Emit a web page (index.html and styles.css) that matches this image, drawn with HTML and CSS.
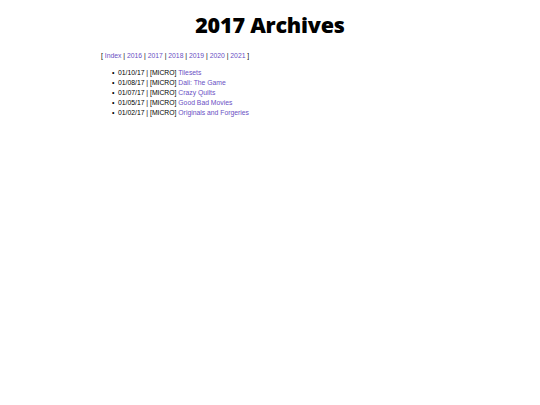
FILE: index.html
```html
<!DOCTYPE html>
<html>
<head>
<meta charset="utf-8">
<link rel="stylesheet" href="styles.css">
</head>
<body>
<h1 class="title">2017 Archives</h1>
<div class="content">
<p class="nav">[ <a href="#">Index</a> | <a href="#">2016</a> | <a href="#">2017</a> | <a href="#">2018</a> | <a href="#">2019</a> | <a href="#">2020</a> | <a href="#">2021</a> ]</p>
<ul class="posts">
<li>01/10/17 | [MICRO] <a href="#">Tilesets</a></li>
<li>01/08/17 | [MICRO] <a href="#">Dali: The Game</a></li>
<li>01/07/17 | [MICRO] <a href="#">Crazy Quilts</a></li>
<li>01/05/17 | [MICRO] <a href="#">Good Bad Movies</a></li>
<li>01/02/17 | [MICRO] <a href="#">Originals and Forgeries</a></li>
</ul>
</div>
</body>
</html>
```
FILE: styles.css
```css
html, body { margin: 0; padding: 0; background: #fff; }
body { font-family: "Liberation Sans", Arial, sans-serif; color: #000; }
.title {
  font-family: "Open Sans", sans-serif;
  font-weight: 800;
  font-size: 21.5px;
  text-align: center;
  margin: 0;
  padding-top: 10px;
  line-height: 30px;
  letter-spacing: -0.2px;
}
.content { padding-left: 101px; font-size: 6.8px; }
.nav { margin: 11px 0 0 0; line-height: 10px; }
.posts { margin: 7px 0 0 0; padding-left: 17px; line-height: 10px; list-style: none; }
.posts li::before { content: "\2022"; display: inline-block; width: 6px; margin-left: -6px; font-size: 7px; }
a { color: #6a4fc4; text-decoration: none; }
```
